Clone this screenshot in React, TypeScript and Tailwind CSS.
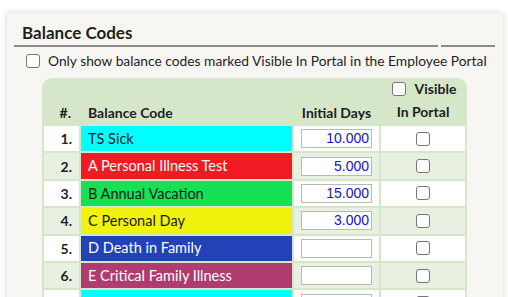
import React from 'react';

interface BalanceCode {
  id: number;
  name: string;
  bg: string;
  fg: string;
  days: string;
}

const codes: BalanceCode[] = [
  { id: 1, name: 'TS Sick', bg: 'bg-[#00ffff]', fg: 'text-[#1a1a1a]', days: '10.000' },
  { id: 2, name: 'A Personal Illness Test', bg: 'bg-[#ef1b22]', fg: 'text-white', days: '5.000' },
  { id: 3, name: 'B Annual Vacation', bg: 'bg-[#16e156]', fg: 'text-[#1a1a1a]', days: '15.000' },
  { id: 4, name: 'C Personal Day', bg: 'bg-[#f2f20f]', fg: 'text-[#1a1a1a]', days: '3.000' },
  { id: 5, name: 'D Death in Family', bg: 'bg-[#2342b8]', fg: 'text-white', days: '' },
  { id: 6, name: 'E Critical Family Illness', bg: 'bg-[#b03b6e]', fg: 'text-white', days: '' },
  { id: 7, name: '', bg: 'bg-[#00ffff]', fg: 'text-[#1a1a1a]', days: '' },
];

const Box: React.FC = () => (
  <span className="inline-block w-[14px] h-[14px] border border-[#767676] rounded-[3px] bg-white shrink-0" />
);

const App: React.FC = () => {
  return (
    <div className="w-[508px] h-[297px] overflow-hidden bg-white font-['Lato',sans-serif] text-[#1f1f1f]">
      <div className="ml-[7px] mt-[13px] w-[496px] h-[300px] bg-[#f7f6f3] shadow-[0_0_6px_rgba(0,0,0,0.18)] px-[7px]">
        <div className="flex gap-[3px]">
          <div className="w-[424px] border-b-2 border-[#8a8a8a] pl-[8px] pt-[9px] pb-[1px] text-[17px] font-bold leading-[22px]">
            Balance Codes
          </div>
          <div className="w-[54px] border-b-2 border-[#8a8a8a]" />
        </div>

        <div className="flex items-center gap-[8px] pl-[12px] mt-[6px] h-[16px] text-[13.8px]">
          <Box />
          <span>Only show balance codes marked Visible In Portal in the Employee Portal</span>
        </div>

        <div className="ml-[28px] mt-[9px] w-[425px] rounded-t-[10px] bg-[#d5e6c9] p-[2px] grid grid-cols-[35px_211px_85px_84px] gap-[2px] text-[14px]">
          <div className="h-[44px] flex items-end justify-end pr-[8px] pb-[1px] font-bold">#.</div>
          <div className="h-[44px] flex items-end pl-[7px] pb-[1px] font-bold">Balance Code</div>
          <div className="h-[44px] flex items-end justify-center pb-[1px] font-bold">Initial Days</div>
          <div className="h-[44px] flex flex-col items-center justify-end pb-[1px] font-bold leading-[22px]">
            <div className="flex items-center gap-[9px] pl-[2px] mb-[1px]">
              <Box />
              <span>Visible</span>
            </div>
            <span>In Portal</span>
          </div>

          {codes.map((c, i) => {
            const rowBg = i % 2 === 0 ? 'bg-white' : 'bg-[#e7f0e1]';
            return (
              <React.Fragment key={c.id}>
                <div className={`h-[25.4px] flex items-center justify-end pr-[7px] font-bold ${rowBg}`}>
                  {c.name ? `${c.id}.` : ''}
                </div>
                <div className={`h-[25.4px] flex items-center pl-[7px] text-[14.5px] ${c.bg} ${c.fg}`}>{c.name}</div>
                <div className={`h-[25.4px] flex items-center justify-center ${rowBg}`}>
                  <div className="w-[71px] h-[19px] border border-[#b9b9b9] bg-white flex items-center justify-end pr-[2px] font-['Liberation_Sans',sans-serif] text-[14px] text-[#1414c8]">
                    {c.days}
                  </div>
                </div>
                <div className={`h-[25.4px] flex items-center justify-center ${rowBg}`}>
                  <Box />
                </div>
              </React.Fragment>
            );
          })}
        </div>
      </div>
    </div>
  );
};

export default App;
